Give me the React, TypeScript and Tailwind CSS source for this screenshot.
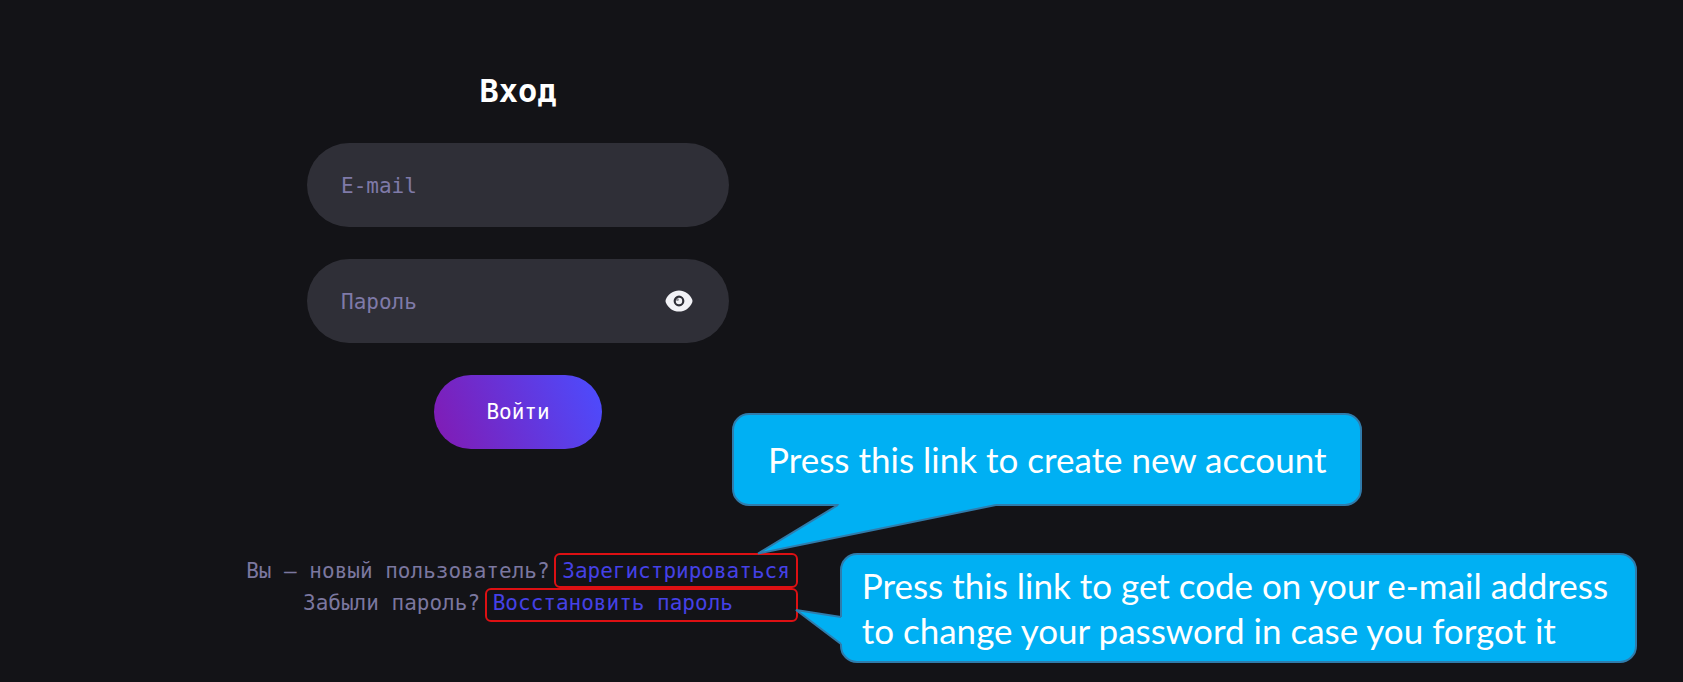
import { useState } from "react";

function EyeIcon() {
  return (
    <svg viewBox="0 0 28 22" className="h-[22px] w-7" aria-hidden="true">
      <path
        d="M14 .5C8.200.5 3.200 4 .8 9.600a3.500 3.500 0 0 0 0 2.800C3.200 18 8.200 21.500 14 21.500S24.800 18 27.200 12.400a3.500 3.500 0 0 0 0-2.800C24.800 4 19.800.5 14 .5Z"
        fill="#f2f2f6"
      />
      <circle cx="14" cy="11" r="4.300" fill="#f2f2f6" stroke="#2f2f37" strokeWidth="2.200" />
      <circle cx="12.400" cy="9.400" r="1.500" fill="#2f2f37" opacity=".5" />
    </svg>
  );
}

const field =
  "h-[84px] w-full rounded-full bg-[#2f2f37] pt-0.5 pl-[34px] pr-20 text-[21px] text-[#f2f2f6] outline-none placeholder:text-[#7f7aa8] placeholder:opacity-100";

const bubble =
  "flex items-center rounded-[17px] border-2 border-[#2f7cac] bg-[#00b0f3] font-['Lato',sans-serif] text-[35px] leading-[45px] whitespace-nowrap text-white";

export default function App() {
  const [visible, setVisible] = useState(false);

  return (
    <main className="grid min-h-screen grid-cols-[1036fr_647fr] overflow-hidden bg-[#131317] font-['DejaVu_Sans_Mono',monospace] text-[21px]">
      <section className="flex flex-col items-center pt-[71px]">
        <h1 className="mb-8 text-[32px] leading-10 font-bold text-white">Вход</h1>

        <form className="flex w-[422px] flex-col items-center gap-8" onSubmit={(e) => e.preventDefault()}>
          <input type="email" aria-label="E-mail" placeholder="E-mail" className={field} />
          <div className="relative w-full">
            <input
              type={visible ? "text" : "password"}
              aria-label="Пароль"
              placeholder="Пароль"
              className={`block ${field}`}
            />
            <button
              type="button"
              aria-label="Показать пароль"
              onClick={() => setVisible(!visible)}
              className="absolute inset-y-0 right-9 flex items-center"
            >
              <EyeIcon />
            </button>
          </div>
          <button
            type="submit"
            className="h-[74px] w-[168px] rounded-full bg-linear-[68deg,#821ab2,#4b4dff] pt-0.5 text-[21px] text-white"
          >
            Войти
          </button>
        </form>

        <div className="mt-[106px] text-center leading-8 whitespace-nowrap text-[#7b779f]">
          <p>
            Вы — новый пользователь?{" "}
            <span className="relative inline-block">
              <a href="#register" className="text-[#4541e6]">
                Зарегистрироваться
              </a>
              <span className="pointer-events-none absolute -top-0.5 -right-2 -bottom-px -left-2 rounded-md border-2 border-[#dd1013]" />
              <span className="absolute -top-[142px] left-[170px]">
                <span className={`${bubble} h-[93px] w-[630px] justify-center`}>
                  Press this link to create new account
                </span>
                <svg viewBox="0 0 240 52" className="absolute top-[90px] left-6 h-[52px] w-60" aria-hidden="true">
                  <path d="M84 0 83 1.500 2 50.500 240 2 240 0Z" fill="#00b0f3" />
                  <path d="M82 2 2 50.500 240 2" fill="none" stroke="#2f7cac" strokeWidth="2" />
                </svg>
              </span>
            </span>
          </p>
          <p>
            Забыли пароль?{" "}
            <span className="relative inline-block">
              <a href="#restore" className="text-[#4541e6]">
                Восстановить пароль
              </a>
              <span className="pointer-events-none absolute top-px -right-[65px] -bottom-[3px] -left-2 rounded-md border-2 border-[#dd1013]" />
              <span className="absolute -top-[34px] left-[347px] text-left">
                <span className={`${bubble} h-[110px] w-[797px] pl-5`}>
                  Press this link to get code on your e-mail address
                  <br />
                  to change your password in case you forgot it
                </span>
                <svg viewBox="0 0 48 36" className="absolute top-[56px] -left-[45px] h-9 w-12" aria-hidden="true">
                  <path d="M1 1 46 8 48 8 48 35 46 35Z" fill="#00b0f3" />
                  <path d="M46 8 1 1 46 35" fill="none" stroke="#2f7cac" strokeWidth="2" />
                </svg>
              </span>
            </span>
          </p>
        </div>
      </section>
    </main>
  );
}
